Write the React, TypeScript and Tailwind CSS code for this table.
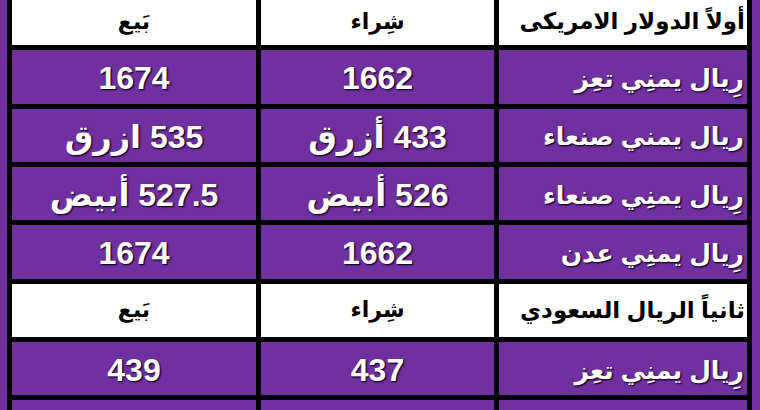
import React from 'react';

type Row = { label: string; buy: string; sell: string };

const usdRows: Row[] = [
  { label: 'رِيال يمنِي تعِز', buy: '1662', sell: '1674' },
  { label: 'ريال يمني صنعاء', buy: '433 أزرق', sell: '535 ازرق' },
  { label: 'رِيال يمنِي صنعاء', buy: '526 أبيض', sell: '527.5 أبيض' },
  { label: 'رِيال يمنِي عدن', buy: '1662', sell: '1674' },
];

const sarRows: Row[] = [
  { label: 'رِيال يمنِي تعِز', buy: '437', sell: '439' },
  { label: '', buy: '', sell: '' },
];

const font = "font-['Liberation_Sans','DejaVu_Sans',sans-serif]";
const shadow = '[text-shadow:1px_1px_1px_#1a0529,1px_1px_2px_#2a0a40]';

const Header: React.FC<{ title: string; first?: boolean }> = ({ title, first }) => (
  <>
    <div className={`bg-white h-[53.33px] flex items-center justify-start pr-[2px] ${first ? 'pt-[6px]' : ''}`}>
      <span className="text-[23px] font-bold text-black leading-none whitespace-nowrap">{title}</span>
    </div>
    <div className={`bg-white h-[53.33px] flex items-center justify-center ${first ? 'pt-[6px]' : ''}`}>
      <span className="text-[22px] font-bold text-black leading-none">شِراء</span>
    </div>
    <div className={`bg-white h-[53.33px] flex items-center justify-center ${first ? 'pt-[6px]' : ''}`}>
      <span className="text-[22px] font-bold text-black leading-none">بَيع</span>
    </div>
  </>
);

const Cell: React.FC<{ text: string; label?: boolean }> = ({ text, label }) => (
  <div
    className={`bg-[#7030a0] h-[53.33px] flex items-center pt-[3px] ${label ? 'justify-start pr-[3px]' : 'justify-center'}`}
  >
    <span
      className={`${label ? 'text-[25px]' : 'text-[32px]'} font-bold text-white leading-none whitespace-nowrap ${shadow}`}
    >
      {text}
    </span>
  </div>
);

const DataRow: React.FC<{ row: Row }> = ({ row }) => (
  <>
    <Cell text={row.label} label />
    <Cell text={row.buy} />
    <Cell text={row.sell} />
  </>
);

export default function App() {
  return (
    <div className={`w-[760px] h-[410px] overflow-hidden bg-[#7030a0] ${font}`}>
      <div
        dir="rtl"
        className="ml-[7px] -mt-[8px] w-[745px] bg-black p-[5px] pt-0 grid grid-cols-[248px_233px_244px] gap-[5px]"
      >
        <Header title="أولاً الدولار الامريكى" first />
        {usdRows.map((r, i) => (
          <DataRow key={`u${i}`} row={r} />
        ))}
        <Header title="ثانياً الريال السعودي" />
        {sarRows.map((r, i) => (
          <DataRow key={`s${i}`} row={r} />
        ))}
      </div>
    </div>
  );
}
